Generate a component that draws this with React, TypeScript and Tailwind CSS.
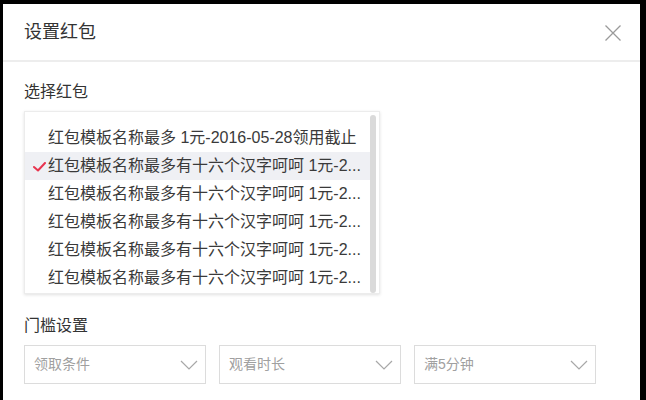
import React from "react";

const rows = [
  "红包模板名称最多 1元-2016-05-28领用截止",
  "红包模板名称最多有十六个汉字呵呵 1元-2...",
  "红包模板名称最多有十六个汉字呵呵 1元-2...",
  "红包模板名称最多有十六个汉字呵呵 1元-2...",
  "红包模板名称最多有十六个汉字呵呵 1元-2...",
  "红包模板名称最多有十六个汉字呵呵 1元-2...",
];

function Chevron() {
  return (
    <svg width="18" height="10" viewBox="0 0 18 10" fill="none">
      <path d="M1 1 L9 9 L17 1" stroke="#a8a8a8" strokeWidth="1.2" />
    </svg>
  );
}

function Select({ label }: { label: string }) {
  return (
    <div className="w-[182px] h-[39px] border border-[#dcdcdc] flex items-center justify-between pl-[9px] pr-[7px]">
      <span className="text-[14px] text-[#a0a0a0]">{label}</span>
      <Chevron />
    </div>
  );
}

export default function App() {
  return (
    <div className="w-[646px] h-[400px] bg-black pl-[3px] pr-[6px] pt-[4px] overflow-hidden font-['Liberation_Sans','Noto_Sans_CJK_SC',sans-serif]">
      <div className="bg-white h-full">
        <div className="h-[58px] border-b-2 border-[#ededed] flex items-center justify-between pl-[21px] pr-[19px] pt-[1px]">
          <span className="text-[18px] text-[#333]">设置红包</span>
          <svg width="16" height="16" viewBox="0 0 16 16" fill="none">
            <path d="M0.5 0.5 L15.5 15.5 M15.5 0.5 L0.5 15.5" stroke="#9a9a9a" strokeWidth="1.3" />
          </svg>
        </div>
        <div className="px-[21px]">
          <div className="mt-[19px] text-[16px] leading-[22px] text-[#333]">选择红包</div>
          <div className="relative mt-[8px] w-[356px] h-[183px] pt-[12px] border border-[#ececec] shadow-[0_1px_3px_rgba(0,0,0,0.12)] overflow-hidden">
            {rows.map((r, i) => (
              <div
                key={i}
                className={`relative w-[345px] h-[28px] flex items-center pl-[23px] text-[16px] text-[#3a3a3a] whitespace-nowrap ${i === 1 ? "bg-[#eff0f4]" : ""}`}
              >
                {i === 1 && (
                  <svg className="absolute left-[8px] top-[10px]" width="13" height="10" viewBox="0 0 13 10" fill="none">
                    <path d="M1 5 L5 8.5 L12 1" stroke="#e8344e" strokeWidth="2" strokeLinecap="round" strokeLinejoin="round" />
                  </svg>
                )}
                {r}
              </div>
            ))}
            <div className="absolute left-[345px] top-[3px] w-[6px] h-[178px] rounded-full bg-[#dadada]" />
          </div>
          <div className="mt-[21px] text-[16px] leading-[22px] text-[#333]">门槛设置</div>
          <div className="mt-[8px] flex gap-[13px]">
            <Select label="领取条件" />
            <Select label="观看时长" />
            <Select label="满5分钟" />
          </div>
        </div>
      </div>
    </div>
  );
}
